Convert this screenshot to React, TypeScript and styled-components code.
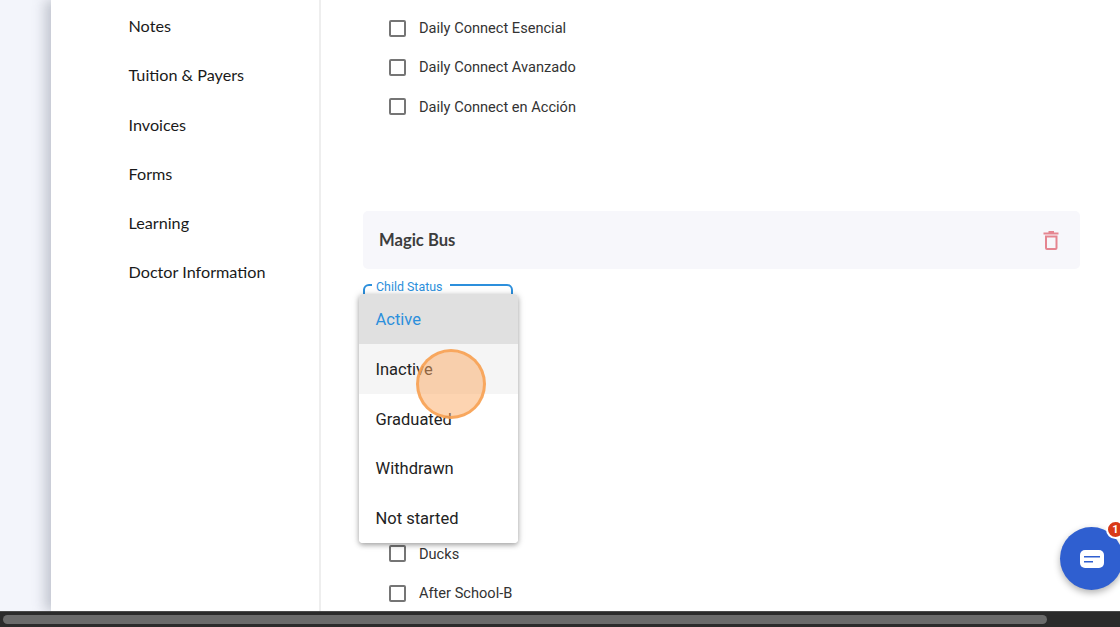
import React from 'react';
import styled, { createGlobalStyle } from 'styled-components';

const GlobalStyle = createGlobalStyle`
  html, body {
    margin: 0;
    padding: 0;
    height: 100%;
    overflow: hidden;
    background: #fff;
  }
  * {
    box-sizing: border-box;
  }
`;

const Page = styled.div`
  position: relative;
  display: flex;
  flex-direction: column;
  width: 1120px;
  height: 627px;
  overflow: hidden;
`;

const Viewport = styled.div`
  display: flex;
  flex: 1;
  min-height: 0;
  background: #f3f5fb;
`;

const Gutter = styled.div`
  width: 51px;
  flex-shrink: 0;
`;

const Sheet = styled.div`
  display: flex;
  flex: 1;
  background: #fff;
  box-shadow: -6px 0 12px rgba(90, 95, 115, 0.32);
`;

const Sidebar = styled.nav`
  display: flex;
  flex-direction: column;
  gap: 26.3px;
  width: 270px;
  flex-shrink: 0;
  padding: 14px 0 0 77.5px;
  border-right: 2px solid #eeeeee;
`;

const NavItem = styled.div`
  height: 23px;
  font-family: Lato, 'Open Sans', sans-serif;
  font-size: 16.2px;
  line-height: 23px;
  color: #1a1a1a;
  white-space: nowrap;
`;

const Content = styled.main`
  display: flex;
  flex-direction: column;
  flex: 1;
  padding: 18px 40px 0 42px;
`;

const CheckList = styled.div`
  display: flex;
  flex-direction: column;
  gap: 19.4px;
  padding-left: 25px;
`;

const CheckRow = styled.label`
  display: flex;
  align-items: center;
  gap: 13.500px;
  height: 20px;
  font-family: Roboto, sans-serif;
  font-size: 14.6px;
  color: #333;
`;

const CheckBox = styled.span`
  width: 17px;
  height: 17px;
  margin-left: 0.5px;
  border: 2px solid #757575;
  border-radius: 2px;
  flex-shrink: 0;
`;

const Card = styled.section`
  display: flex;
  align-items: center;
  justify-content: space-between;
  height: 58px;
  margin-top: 94px;
  padding: 0 19px 0 16px;
  background: #f7f7fb;
  border-radius: 5px;
`;

const CardTitle = styled.h3`
  margin: 0;
  font-family: Lato, 'Open Sans', sans-serif;
  font-size: 16.6px;
  font-weight: 700;
  color: #3d3d3d;
`;

const TrashIcon = styled.svg`
  width: 20px;
  height: 22px;
  display: block;
`;

const Field = styled.div`
  position: relative;
  width: 150px;
  height: 56px;
  margin-top: 15px;
  border: 2px solid #2c8fdc;
  border-radius: 6px;
`;

const FieldLabel = styled.span`
  position: absolute;
  top: -6px;
  left: 7px;
  padding: 0 8px 0 4px;
  background: #fff;
  font-family: Roboto, sans-serif;
  font-size: 12.4px;
  line-height: 14px;
  color: #2c8fdc;
`;

const LowerList = styled(CheckList)`
  margin-top: 204px;
`;

const Menu = styled.ul`
  position: absolute;
  top: 294px;
  left: 359px;
  width: 159px;
  margin: 0;
  padding: 0;
  list-style: none;
  background: #fff;
  border-radius: 4px;
  overflow: hidden;
  box-shadow: 0 2px 5px rgba(0, 0, 0, 0.3), 0 1px 8px rgba(0, 0, 0, 0.12);
`;

const MenuItem = styled.li<{ $state?: 'selected' | 'hover' }>`
  height: 49.8px;
  padding: 1px 0 0 16.5px;
  font-family: Roboto, sans-serif;
  font-size: 16.5px;
  line-height: 50px;
  color: ${(p) => (p.$state === 'selected' ? '#2c8fdc' : '#222')};
  background: ${(p) =>
    p.$state === 'selected' ? '#e0e0e0' : p.$state === 'hover' ? '#f5f5f5' : '#fff'};
`;

const ClickMarker = styled.div`
  position: absolute;
  top: 349px;
  left: 416px;
  width: 70px;
  height: 70px;
  border: 3px solid rgba(247, 160, 80, 0.85);
  border-radius: 50%;
  background: rgba(252, 170, 100, 0.5);
`;

const ChatButton = styled.button`
  position: absolute;
  top: 527px;
  left: 1060px;
  display: flex;
  align-items: center;
  justify-content: center;
  width: 63px;
  height: 63px;
  padding: 0;
  border: none;
  border-radius: 50%;
  background: #2f5fd0;
  box-shadow: 0 3px 7px rgba(0, 0, 0, 0.3);
`;

const ChatIcon = styled.svg`
  width: 24px;
  height: 18px;
  display: block;
`;

const Badge = styled.span`
  position: absolute;
  top: -7px;
  left: 46px;
  width: 19px;
  height: 19px;
  border: 2px solid #fff;
  border-radius: 50%;
  background: #d93a17;
  font-family: Roboto, sans-serif;
  font-size: 11px;
  font-weight: 700;
  line-height: 15px;
  text-align: center;
  color: #fff;
`;

const ScrollTrack = styled.div`
  height: 16px;
  flex-shrink: 0;
  padding: 3px 73px 3px 3px;
  background: #2b2b2b;
  border-top: 1px solid #4a4a4a;
`;

const ScrollThumb = styled.div`
  height: 100%;
  background: #6b6b6b;
  border-radius: 5px;
`;

const navItems = ['Notes', 'Tuition & Payers', 'Invoices', 'Forms', 'Learning', 'Doctor Information'];
const programs = ['Daily Connect Esencial', 'Daily Connect Avanzado', 'Daily Connect en Acción'];
const classrooms = ['Ducks', 'After School-B'];
const statuses = ['Active', 'Inactive', 'Graduated', 'Withdrawn', 'Not started'];

const App: React.FC = () => {
  return (
    <Page>
      <GlobalStyle />
      <Viewport>
        <Gutter />
        <Sheet>
          <Sidebar>
            {navItems.map((item) => (
              <NavItem key={item}>{item}</NavItem>
            ))}
          </Sidebar>
          <Content>
            <CheckList>
              {programs.map((item) => (
                <CheckRow key={item}>
                  <CheckBox />
                  {item}
                </CheckRow>
              ))}
            </CheckList>
            <Card>
              <CardTitle>Magic Bus</CardTitle>
              <TrashIcon viewBox="0 0 20 22">
                <path d="M7.500 2h5.500v2H7.500z M2.500 3.500h15v2h-15z" fill="#e58590" />
                <path
                  d="M4 6.500h12.500V19a2 2 0 0 1-2 2H6a2 2 0 0 1-2-2z M6 8.500V19h8.500V8.500z"
                  fill="#e58590"
                  fillRule="evenodd"
                />
              </TrashIcon>
            </Card>
            <Field>
              <FieldLabel>Child Status</FieldLabel>
            </Field>
            <LowerList>
              {classrooms.map((item) => (
                <CheckRow key={item}>
                  <CheckBox />
                  {item}
                </CheckRow>
              ))}
            </LowerList>
          </Content>
        </Sheet>
      </Viewport>
      <ScrollTrack>
        <ScrollThumb />
      </ScrollTrack>
      <Menu>
        {statuses.map((status, i) => (
          <MenuItem key={status} $state={i === 0 ? 'selected' : i === 1 ? 'hover' : undefined}>
            {status}
          </MenuItem>
        ))}
      </Menu>
      <ClickMarker />
      <ChatButton>
        <ChatIcon viewBox="0 0 24 18">
          <path
            d="M5 0h14a5 5 0 0 1 5 5v8a5 5 0 0 1-5 5H5a5 5 0 0 1-5-5V5a5 5 0 0 1 5-5z"
            fill="#fff"
          />
          <path d="M4 6h16v1.600H4z M4 11h9v1.600H4z" fill="#2f5fd0" />
        </ChatIcon>
        <Badge>1</Badge>
      </ChatButton>
    </Page>
  );
};

export default App;
